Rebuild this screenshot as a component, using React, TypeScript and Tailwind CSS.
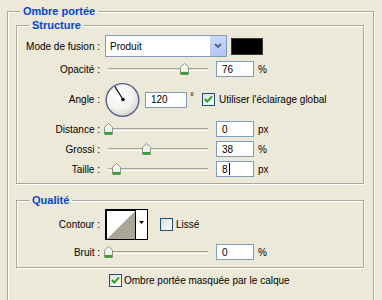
import React from "react";

const FONT = "font-['Liberation_Sans',Arial,sans-serif]";

function GroupBox({ title, className, children }: { title: string; className: string; children?: React.ReactNode }) {
  return (
    <div className={`relative border border-[#ACA899] shadow-[inset_1px_1px_0_#fff,1px_1px_0_#fff] ${className}`}>
      <span className="absolute top-[-7px] left-[12px] bg-[#ECE9D8] px-[3px] text-[11px] leading-[13px] font-bold text-[#0046D5]">
        {title}
      </span>
      {children}
    </div>
  );
}

function Label({ children }: { children: React.ReactNode }) {
  return <div className="w-[84px] shrink-0 text-right pr-[1px] text-black">{children}</div>;
}

function Thumb() {
  return (
    <svg width="9" height="12" viewBox="0 0 9 12">
      <defs>
        <linearGradient id="tg" x1="0" y1="0" x2="0" y2="1">
          <stop offset="0" stopColor="#ffffff" />
          <stop offset="1" stopColor="#e4e6dc" />
        </linearGradient>
      </defs>
      <path d="M4.5 0.5 L8.5 4.2 L8.5 11.5 L0.5 11.5 L0.5 4.2 Z" fill="url(#tg)" stroke="#8a9488" />
      <rect x="1" y="9" width="7" height="2.5" fill="#2fa12f" />
    </svg>
  );
}

function Slider({ value }: { value: number }) {
  return (
    <div className="relative w-[104px] h-[16px] shrink-0">
      <div className="absolute left-[4px] right-0 top-[7px] h-[3px] border-t border-[#A3A29A] bg-[#E6E4DA] border-b border-b-white rounded-l-[2px]" />
      <div className="absolute top-[2px]" style={{ left: value }}>
        <Thumb />
      </div>
    </div>
  );
}

function Field({ value, w = 38, cursor }: { value: string; w?: number; cursor?: boolean }) {
  return (
    <div
      className={`h-[16px] shrink-0 border border-[#7F9DB9] bg-white pl-[5px] flex items-center text-black ${w === 38 ? "w-[38px]" : "w-[42px]"}`}
    >
      {value}
      {cursor && <span className="inline-block w-[1px] h-[12px] bg-black ml-[1px]" />}
    </div>
  );
}

function CheckBox({ checked }: { checked?: boolean }) {
  return (
    <div className="w-[13px] h-[13px] shrink-0 border border-[#1C5180] bg-gradient-to-br from-[#DCDCD7] to-white flex items-center justify-center">
      {checked && (
        <svg width="11" height="11" viewBox="0 0 11 11">
          <path d="M2 5 L4.3 7.6 L9 2.4" fill="none" stroke="#21A121" strokeWidth="2" />
        </svg>
      )}
    </div>
  );
}

function SliderRow({ label, value, text, unit, cursor, className }: { label: string; value: number; text: string; unit: string; cursor?: boolean; className: string }) {
  return (
    <div className={`flex items-center h-[16px] ${className}`}>
      <Label>{label}</Label>
      <div className="ml-[3px]">
        <Slider value={value} />
      </div>
      <div className="ml-[8px]">
        <Field value={text} cursor={cursor} />
      </div>
      <span className="ml-[4px] text-black">{unit}</span>
    </div>
  );
}

function Dial() {
  return (
    <svg width="36" height="36" viewBox="0 0 36 36">
      <defs>
        <radialGradient id="dg" cx="0.4" cy="0.35" r="0.7">
          <stop offset="0" stopColor="#ffffff" />
          <stop offset="0.6" stopColor="#f3f2ee" />
          <stop offset="1" stopColor="#cfcdc4" />
        </radialGradient>
      </defs>
      <circle cx="18" cy="18" r="16.8" fill="url(#dg)" stroke="#53618C" strokeWidth="1.4" />
      <line x1="18.5" y1="17.5" x2="10" y2="4" stroke="#000" strokeWidth="1.1" />
      <circle cx="18.5" cy="17.5" r="1.8" fill="#000" />
    </svg>
  );
}

function Contour() {
  return (
    <svg width="43" height="31" viewBox="0 0 43 31">
      <rect x="0" y="0" width="43" height="31" fill="#000" />
      <rect x="2" y="2" width="28" height="28" fill="#ffffff" />
      <path d="M2 30 L30 2 L30 30 Z" fill="#ABA797" />
      <rect x="31" y="1" width="11" height="29" fill="#ffffff" />
      <path d="M34 12 L39 12 L36.5 15 Z" fill="#000" />
    </svg>
  );
}

export default function App() {
  return (
    <div className={`w-[382px] h-[300px] overflow-hidden bg-[#ECE9D8] text-[10px] leading-[13px] ${FONT}`}>
      <div className="pt-[11px] pl-[7px]">
        <GroupBox title="Ombre portée" className="w-[367px] h-[300px] pl-[8px] pt-[13px]">
          <GroupBox title="Structure" className="w-[348px] h-[159px] pt-[9px]">
            <div className="flex items-center h-[22px]">
              <Label>Mode de fusion :</Label>
              <div className="ml-[4px] w-[122px] h-[22px] border border-[#7F9DB9] bg-white flex items-center">
                <span className="flex-1 pl-[4px] text-black">Produit</span>
                <div className="w-[16px] h-[20px] bg-gradient-to-b from-[#CBDAFC] to-[#B2C6F6] flex items-center justify-center">
                  <svg width="8" height="6" viewBox="0 0 8 6">
                    <path d="M1 1 L4 4 L7 1" fill="none" stroke="#4D6185" strokeWidth="1.8" />
                  </svg>
                </div>
              </div>
              <div className="ml-[4px] w-[32px] h-[17px] bg-black border border-[#3a3a3a]" />
            </div>

            <SliderRow className="mt-[4px]" label="Opacité :" value={76} text="76" unit="%" />

            <div className="flex items-center h-[35px] mt-[5px]">
              <Label>Angle :</Label>
              <div className="ml-[4px] w-[35px] h-[35px] flex items-center justify-center">
                <Dial />
              </div>
              <div className="ml-[5px]">
                <Field value="120" w={42} />
              </div>
              <span className="ml-[3px] w-[12px] self-start mt-[8px] text-black">°</span>
              <CheckBox checked />
              <span className="ml-[4px] text-black">Utiliser l'éclairage global</span>
            </div>

            <SliderRow className="mt-[4px]" label="Distance :" value={0} text="0" unit="px" />
            <SliderRow className="mt-[4px]" label="Grossi :" value={38} text="38" unit="%" />
            <SliderRow className="mt-[4px]" label="Taille :" value={8} text="8" unit="px" cursor />
          </GroupBox>

          <GroupBox title="Qualité" className="w-[348px] h-[68px] mt-[16px] pt-[8px]">
            <div className="flex items-center h-[31px]">
              <Label>Contour :</Label>
              <div className="ml-[4px]">
                <Contour />
              </div>
              <div className="ml-[12px]">
                <CheckBox />
              </div>
              <span className="ml-[3px] text-black">Lissé</span>
            </div>
            <SliderRow className="mt-[4px]" label="Bruit :" value={0} text="0" unit="%" />
          </GroupBox>

          <div className="flex items-center mt-[6px] ml-[93px] h-[13px]">
            <CheckBox checked />
            <span className="ml-[2px] text-black">Ombre portée masquée par le calque</span>
          </div>
        </GroupBox>
      </div>
    </div>
  );
}
